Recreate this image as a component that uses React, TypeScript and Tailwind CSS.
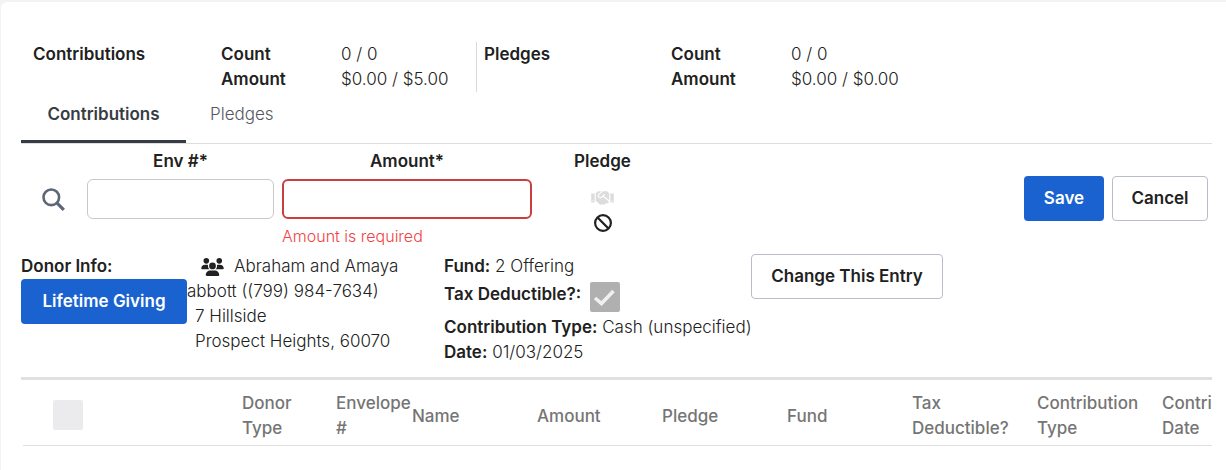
import React, { useState } from 'react';
import { FaHandshake } from 'react-icons/fa';
import { FaBan, FaUsers } from 'react-icons/fa6';

interface Summary {
  title: string;
  count: string;
  amount: string;
}

interface Column {
  label: string;
  width: string;
}

const summaries: Summary[] = [
  { title: 'Contributions', count: '0 / 0', amount: '$0.00 / $5.00' },
  { title: 'Pledges', count: '0 / 0', amount: '$0.00 / $0.00' },
];

const tabs = ['Contributions', 'Pledges'];

const columns: Column[] = [
  { label: 'Donor Type', width: 'w-[94px]' },
  { label: 'Envelope #', width: 'w-[76px]' },
  { label: 'Name', width: 'w-[125px]' },
  { label: 'Amount', width: 'w-[125px]' },
  { label: 'Pledge', width: 'w-[125px]' },
  { label: 'Fund', width: 'w-[125px]' },
  { label: 'Tax Deductible?', width: 'w-[125px]' },
  { label: 'Contribution Type', width: 'w-[125px]' },
  { label: 'Contribution Date', width: 'w-[125px]' },
];

const primaryButton = 'h-[45px] rounded bg-[#1a62cf] font-semibold text-white whitespace-nowrap';
const outlineButton = 'h-[45px] rounded border border-[#b9bdc9] bg-white font-semibold whitespace-nowrap';

const App = () => {
  const [activeTab, setActiveTab] = useState('Contributions');

  return (
    <div className="min-h-screen bg-[#f3f3f5] pt-0.5 pl-px font-['Inter',sans-serif] text-[17px] leading-[25px] font-light text-[#212121]">
      <main className="min-h-[468px] rounded-tl-md bg-white pt-10 pr-3.5 pl-5">
        {/* Totals */}
        <section className="flex pl-3">
          {summaries.map((item) => (
            <dl
              key={item.title}
              className="grid w-[450px] grid-cols-[188px_120px_1fr] first:w-[443px] last:grid-cols-[187px_120px_1fr] last:border-l last:border-[#d9d9d9] last:pl-[7px]"
            >
              <dt className="row-span-2 font-semibold">{item.title}</dt>
              <dt className="font-semibold">Count</dt>
              <dd>{item.count}</dd>
              <dt className="font-semibold">Amount</dt>
              <dd className="whitespace-nowrap">{item.amount}</dd>
            </dl>
          ))}
        </section>

        {/* Tabs */}
        <div role="tablist" className="flex border-b border-[#dedede] text-[#55595f]">
          {tabs.map((tab) => (
            <button
              key={tab}
              role="tab"
              aria-selected={activeTab === tab}
              onClick={() => setActiveTab(tab)}
              className="h-[51px] border-b-[3px] border-transparent px-6 pb-[3px] aria-selected:w-[165px] aria-selected:border-[#373c44] aria-selected:px-0 aria-selected:font-semibold aria-selected:text-[#373c44]"
            >
              {tab}
            </button>
          ))}
        </div>

        {/* Entry form */}
        <form className="flex items-start pt-[5px]" onSubmit={(e) => e.preventDefault()}>
          <button type="button" aria-label="Search" className="mt-[39px] mr-[22px] ml-[21px] text-[#5d6778]">
            <svg viewBox="0 0 23 23" className="size-[23px]" fill="none" stroke="currentColor" aria-hidden>
              <circle cx="9.3" cy="9.3" r="7.8" strokeWidth="2.6" />
              <path d="M14.8 14.8 L21.8 21.8" strokeWidth="3.2" />
            </svg>
          </button>
          <div className="mr-2 w-[187px]">
            <label htmlFor="env" className="mb-[5px] block text-center font-semibold">Env #*</label>
            <input id="env" className="block h-10 w-full rounded-md border border-[#c9c9c9] px-3 outline-none" />
          </div>
          <div className="w-[250px]">
            <label htmlFor="amount" className="mb-[5px] block text-center font-semibold">Amount*</label>
            <input
              id="amount"
              aria-invalid
              aria-describedby="amount-error"
              className="block h-10 w-full rounded-md border-2 border-[#c93f40] px-3 outline-none"
            />
            <p id="amount-error" className="pt-[5px] text-base leading-[25px] text-[#ef4444]">Amount is required</p>
          </div>
          <div className="flex w-[141px] flex-col items-center">
            <span className="font-semibold">Pledge</span>
            <FaHandshake className="mt-[15px] h-[18px] w-[23px] text-[#dcdcdc]" />
            <FaBan className="mt-[7px] size-[18px]" />
          </div>
          <div className="mt-[27px] mr-1 ml-auto flex gap-2">
            <button type="submit" className={`${primaryButton} w-20`}>Save</button>
            <button type="button" className={`${outlineButton} w-24`}>Cancel</button>
          </div>
        </form>

        {/* Donor details */}
        <section className="flex items-start pt-[5px]">
          <div className="w-[166px]">
            <h2 className="font-semibold">Donor Info:</h2>
            <button type="button" className={`${primaryButton} w-full`}>Lifetime Giving</button>
          </div>
          <div className="w-[257px]">
            <div className="flex items-center">
              <FaUsers className="mr-2.5 ml-3.5 h-[18px] w-[23px]" />
              Abraham and Amaya
            </div>
            <div>abbott ((799) 984-7634)</div>
            <address className="pl-2 not-italic">
              7 Hillside
              <br />
              Prospect Heights, 60070
            </address>
          </div>
          <div className="w-[307px] whitespace-nowrap">
            <div><b className="font-semibold">Fund:</b> 2 Offering</div>
            <div className="flex h-9 items-start pt-[3px]">
              <label htmlFor="deductible" className="font-semibold">Tax Deductible?:</label>
              <span className="ml-[9px] grid">
                <input
                  id="deductible"
                  type="checkbox"
                  defaultChecked
                  disabled
                  className="col-start-1 row-start-1 size-[30px] appearance-none rounded-xs bg-[#b0b0b0]"
                />
                <svg viewBox="0 0 30 30" className="col-start-1 row-start-1 size-[30px]" aria-hidden>
                  <path d="M5 16 L11.5 21.5 L23.5 9" fill="none" stroke="#f0f0f0" strokeWidth="3.6" />
                </svg>
              </span>
            </div>
            <div><b className="font-semibold">Contribution Type:</b> Cash (unspecified)</div>
            <div><b className="font-semibold">Date:</b> 01/03/2025</div>
          </div>
          <button type="button" className={`${outlineButton} w-48`}>Change This Entry</button>
        </section>

        {/* Entries */}
        <div className="mt-3 overflow-x-auto border-t-[3px] border-[#e0e0e0] pl-0.5 [scrollbar-width:none]">
          <table className="w-[1264px] table-fixed border-b border-[#e0e0e0] text-left text-[#757575]">
            <thead>
              <tr className="h-[65px]">
                <th className="w-[219px] pt-1.5 pl-[30px]">
                  <input type="checkbox" aria-label="Select all" disabled className="block size-[30px] appearance-none rounded-xs bg-[#ebebed]" />
                </th>
                {columns.map((column) => (
                  <th key={column.label} className={`${column.width} pt-2 pr-4 font-medium`}>
                    {column.label}
                  </th>
                ))}
              </tr>
            </thead>
          </table>
        </div>
      </main>
    </div>
  );
};

export default App;
